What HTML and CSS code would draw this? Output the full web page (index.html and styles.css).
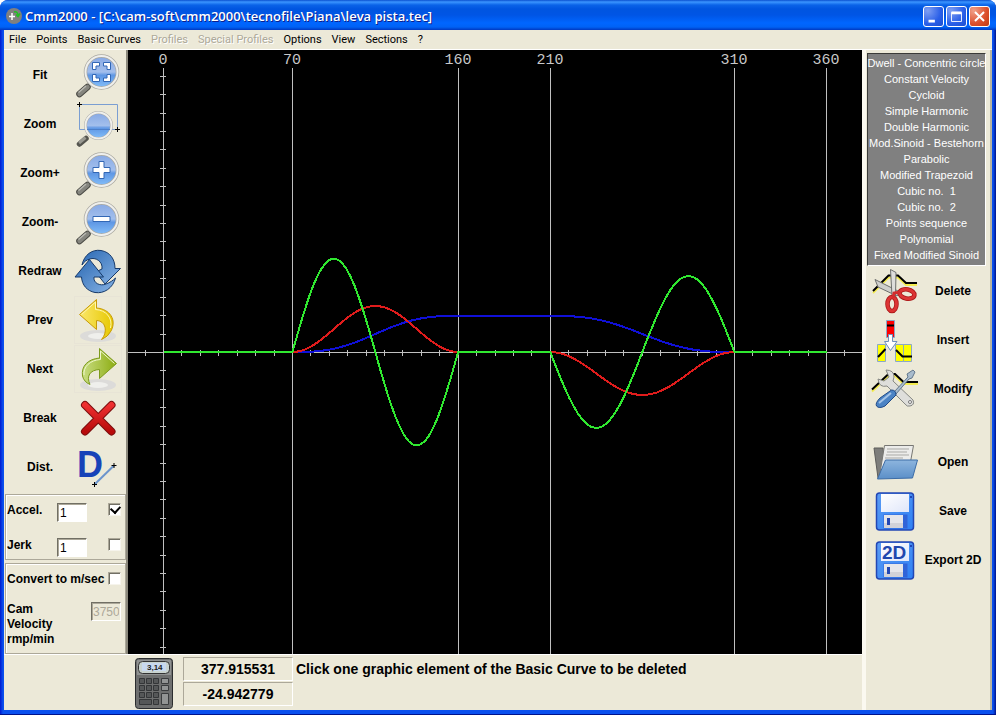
FILE: index.html
```html
<!DOCTYPE html>
<html lang="en">
<head>
<meta charset="utf-8">
<title>Cmm2000</title>
<link rel="stylesheet" href="styles.css">
</head>
<body>
<svg class="defs" aria-hidden="true">
  <defs>
    <linearGradient id="lens" x1="0" y1="0" x2="0" y2="1">
      <stop offset="0" stop-color="#86a8e4"/><stop offset=".5" stop-color="#a3bfec"/>
      <stop offset=".6" stop-color="#5f97e4"/><stop offset="1" stop-color="#84bffa"/>
    </linearGradient>
    <linearGradient id="blueArrow" x1="0" y1="0" x2="1" y2="1">
      <stop offset="0" stop-color="#2c6ab4"/><stop offset="1" stop-color="#86b2e4"/>
    </linearGradient>
    <linearGradient id="gold"><stop offset="0" stop-color="#fbe76a"/><stop offset="1" stop-color="#e6c800"/></linearGradient>
    <linearGradient id="leaf"><stop offset="0" stop-color="#c9dd83"/><stop offset="1" stop-color="#8cac10"/></linearGradient>
    <linearGradient id="red" x1="0" y1="0" x2="0" y2="1"><stop offset="0" stop-color="#ee3030"/><stop offset="1" stop-color="#b80a0a"/></linearGradient>
    <linearGradient id="disk" x1="0" y1="0" x2="1" y2="1"><stop offset="0" stop-color="#5b9cf4"/><stop offset="1" stop-color="#2f80f4"/></linearGradient>
    <linearGradient id="paper" x1="0" y1="0" x2="1" y2="1"><stop offset="0" stop-color="#fff"/><stop offset="1" stop-color="#dfe6fa"/></linearGradient>
    <linearGradient id="folder" x1="0" y1="0" x2="0" y2="1"><stop offset="0" stop-color="#8db5de"/><stop offset="1" stop-color="#5b8fc8"/></linearGradient>
    <g id="magnifier">
      <path d="M5.500 43L13.500 36" stroke="#484843" stroke-width="6.500" stroke-linecap="round"/>
      <path d="M5.500 43L13.500 36" stroke="#85857e" stroke-width="4.500" stroke-linecap="round"/>
      <path d="M4.500 41.500L12 35" stroke="#b9b9b2" stroke-width="1.500"/>
      <circle cx="27.500" cy="21" r="16" fill="url(#lens)" stroke="#aaa9a2" stroke-width="3.500"/>
      <circle cx="27.500" cy="21" r="16" fill="none" stroke="#efefec" stroke-width="2"/>
    </g>
    <g id="floppy">
      <rect x="6.500" y="6" width="37" height="37" rx="3" fill="url(#disk)" stroke="#2347b4" stroke-width="1.500"/>
      <path d="M11 7h28v18H11z" fill="url(#paper)"/>
      <rect x="40" y="9" width="2" height="2" fill="#2347b4"/>
      <rect x="13.500" y="27.500" width="24" height="14" fill="#3164d8"/>
      <path d="M14 28h19v13H14z" fill="#e6e6ea"/><path d="M14 36h19v5H14z" fill="#d2d2d8"/>
      <rect x="17" y="31" width="3" height="7" fill="#2347b4"/>
    </g>
  </defs>
</svg>

<div class="window">
  <header class="titlebar">
    <svg class="app-icon" viewBox="0 0 16 16"><circle cx="8" cy="8" r="8" fill="#808080"/><path d="M6 5v7M3 8.500h6" stroke="#fff" stroke-width="1.500"/><path d="M8 4q4-1 4 4M10 6.500l2 2 2-3" stroke="#22c022" stroke-width="1.500" fill="none"/></svg>
    <h1 class="title">Cmm2000 - [C:\cam-soft\cmm2000\tecnofile\Piana\leva pista.tec]</h1>
    <button class="win-btn" aria-label="Minimize"><svg viewBox="0 0 21 21"><path d="M5 14h7v3H5z" fill="#fff"/></svg></button>
    <button class="win-btn" aria-label="Maximize"><svg viewBox="0 0 21 21"><path d="M5 6h11v10H5z" fill="none" stroke="#fff"/><path d="M5 5h11v3H5z" fill="#fff"/></svg></button>
    <button class="win-btn close" aria-label="Close"><svg viewBox="0 0 21 21"><path d="M5.500 5.500l10 10M15.500 5.500l-10 10" stroke="#fff" stroke-width="2.200"/></svg></button>
  </header>

  <nav class="menubar">
    <button>File</button><button>Points</button><button>Basic Curves</button><button disabled>Profiles</button><button disabled>Special Profiles</button><button>Options</button><button>View</button><button>Sections</button><button>?</button>
  </nav>

  <main class="workspace">
    <div class="center">
      <div class="upper">
        <aside class="left">
          <div class="tools">
            <button class="tool"><span>Fit</span><svg viewBox="0 0 48 48"><use href="#magnifier"/><path d="M18.500 18.500v-7h7v3.500h-3.500v3.500zM29.500 11.500h7v7h-3.500v-3.500h-3.500zM36.500 23.500v7h-7v-3.500h3.500v-3.500zM25.500 30.500h-7v-7h3.500v3.500h3.500z" fill="#fff" stroke="#3267b5"/></svg></button>
            <button class="tool"><span>Zoom</span><svg viewBox="0 0 48 48"><path d="M5.500 4.500h38v25h-38z" fill="none" stroke="#7a9ed2"/><path d="M5.500 44L12 38.500" stroke="#55554f" stroke-width="5.500" stroke-linecap="round"/><path d="M5 43L11.500 37.500" stroke="#999991" stroke-width="3"/><circle cx="24.500" cy="25.500" r="13" fill="url(#lens)" stroke="#aaa9a2" stroke-width="3"/><circle cx="24.500" cy="25.500" r="13" fill="none" stroke="#efefec" stroke-width="2"/><path d="M13 29.500h23" stroke="#4d7fc9"/><path d="M3 4.500h5M5.500 2v5M41 29.500h5M43.500 27v5" stroke="#000"/></svg></button>
            <button class="tool"><span>Zoom+</span><svg viewBox="0 0 48 48"><use href="#magnifier"/><path d="M25 12.500h5v6h6v5h-6v6h-5v-6h-6v-5h6z" fill="#fff" stroke="#3267b5"/></svg></button>
            <button class="tool"><span>Zoom-</span><svg viewBox="0 0 48 48"><use href="#magnifier"/><path d="M19 18.500h17v5H19z" fill="#fff" stroke="#3267b5"/></svg></button>
            <button class="tool"><span>Redraw</span><svg viewBox="0 0 48 48"><g fill="url(#blueArrow)" stroke="#173a6a"><path d="M8 18C10 8 18 2 27 3.500 36 5 41 12 41 21.500L46.500 21.500 31 37 21.500 25 28 22C29 14 21 10 16 12 12 13 10 15 8 18z"/><path d="M41.500 31C39 41 30 47 21 45.500 13 44 8 38 7.500 30L1 30 15.500 12.500 29.500 30 20 30C19 36 26 39.500 32 37 36 35.500 39 33.500 41.500 31z"/></g></svg></button>
            <button class="tool"><span>Prev</span><svg class="boxed" viewBox="0 0 48 48"><ellipse cx="24" cy="40" rx="18" ry="6" fill="#dcdbd9"/><ellipse cx="24" cy="40" rx="10" ry="3" fill="#efefec"/><path d="M5.500 18.500L22.500 3.500V12C36 13 43 24 37 35Q34 41 27.500 43.500C34 36 32 25 22.500 24.500V33.500z" fill="url(#gold)" stroke="#c79a08"/><path d="M7.500 18.500L21.500 6V13.500C32 14 39 22 36.500 32" fill="none" stroke="#fff6b0"/></svg></button>
            <button class="tool"><span>Next</span><svg class="boxed" viewBox="0 0 48 48"><ellipse cx="24" cy="40" rx="18" ry="6" fill="#dcdbd9"/><ellipse cx="24" cy="40" rx="10" ry="3" fill="#efefec"/><path d="M42.500 18.500L25.500 3.500V13C14 14 7 21 8.500 31Q10 37 16 39.500C12 31 16 25 25.500 24.500V33.500z" fill="url(#leaf)" stroke="#7d9b1c"/><path d="M40.500 18.500L26.500 6V14.500C16 15 9 22 10 30" fill="none" stroke="#eff7cc"/></svg></button>
            <button class="tool"><span>Break</span><svg viewBox="0 0 48 48"><path d="M11 11L37.500 37.500M37.500 11L11 37.500" stroke="#7b0d0d" stroke-width="8" stroke-linecap="round"/><path d="M11 11L37.500 37.500M37.500 11L11 37.500" stroke="url(#red)" stroke-width="6" stroke-linecap="round"/></svg></button>
            <button class="tool"><span>Dist.</span><svg viewBox="0 0 48 48"><text x="3" y="34" class="glyph-d">D</text><path d="M20.500 41.500L40 22.500" stroke="#6b94cc" stroke-width="2"/><path d="M18 41.500h5M20.500 39v5M37.500 22.500h5M40 20v5" stroke="#000"/></svg></button>
          </div>
          <section class="frame">
            <div class="pair"><label for="accel">Accel.</label><input class="num" id="accel" value="1"><input type="checkbox" class="check" aria-label="Show acceleration" checked></div>
            <div class="pair"><label for="jerk">Jerk</label><input class="num" id="jerk" value="1"><input type="checkbox" class="check" aria-label="Show jerk"></div>
          </section>
          <section class="frame grow">
            <div class="convert"><label for="conv">Convert to m/sec</label><input type="checkbox" class="check" id="conv"></div>
            <div class="velocity"><label for="vel">Cam Velocity rmp/min</label><input class="num" id="vel" value="3750" disabled></div>
          </section>
        </aside>
        <svg class="chart" id="chart" viewBox="0 0 734 604" role="img" aria-label="Cam diagram"></svg>
      </div>
      <footer class="status">
        <svg class="calc" viewBox="0 0 38 51">
          <rect x=".5" y=".5" width="37" height="50" rx="3" fill="#6e6f6f" stroke="#2b2d2f"/>
          <path d="M2 2h34v15H2z" fill="#8f9191"/><rect x="3.500" y="3.500" width="31" height="12" rx="4" fill="#c9d3cf" stroke="#333"/>
          <rect x="7" y="5" width="24" height="8" fill="#c8d8ee"/><text x="12" y="12" class="glyph-calc">3,14</text>
          <g fill="#555758" stroke="#343638"><path d="M4.500 20.500h5v5h-5zM11.500 20.500h5v5h-5zM18.500 20.500h5v5h-5zM4.500 27.500h5v5h-5zM11.500 27.500h5v5h-5zM18.500 27.500h5v5h-5zM4.500 34.500h5v5h-5zM11.500 34.500h5v5h-5zM18.500 34.500h5v5h-5zM4.500 41.500h12v5h-12zM18.500 41.500h5v5h-5z"/></g>
          <path d="M26.500 20.500h7v5h-7zM26.500 27.500h7v5h-7zM26.500 35.500h7v11h-7z" fill="#929494" stroke="#3a3c3e"/>
        </svg>
        <div class="readouts"><output>377.915531</output><output>-24.942779</output></div>
        <p class="message">Click one graphic element of the Basic Curve to be deleted</p>
      </footer>
    </div>

    <aside class="right">
      <ul class="laws">
        <li>Dwell - Concentric circle</li><li>Constant Velocity</li><li>Cycloid</li><li>Simple Harmonic</li><li>Double Harmonic</li><li>Mod.Sinoid - Bestehorn</li><li>Parabolic</li><li>Modified Trapezoid</li><li>Cubic no.&nbsp; 1</li><li>Cubic no.&nbsp; 2</li><li>Points sequence</li><li>Polynomial</li><li>Fixed Modified Sinoid</li>
      </ul>
      <div class="actions">
        <button class="action"><svg viewBox="0 0 48 48"><path d="M3 26L18.500 10.500H28L36 18H47" fill="none" stroke="#f4ec50" stroke-width="2"/><path d="M3 24L18.500 8.500H28L36 16H47" fill="none" stroke="#000" stroke-width="2"/><path d="M5 12.500L30 25l-3 4L8 20z" fill="#cfcfcb" stroke="#6d6f6d"/><path d="M20.500 2.500L26 5.500 25.500 29H22z" fill="#dddddb" stroke="#6d6f6d"/><ellipse cx="22" cy="37" rx="4.500" ry="7" fill="none" stroke="#a81515" stroke-width="4.500"/><ellipse cx="22" cy="37" rx="4.500" ry="7" fill="none" stroke="#dc3434" stroke-width="3"/><ellipse cx="37" cy="27" rx="7.500" ry="4.500" transform="rotate(10 37 27)" fill="none" stroke="#a81515" stroke-width="4.500"/><ellipse cx="37" cy="27" rx="7.500" ry="4.500" transform="rotate(10 37 27)" fill="none" stroke="#dc3434" stroke-width="3"/><path d="M23 31l1-5 7-1" fill="none" stroke="#d22d2d" stroke-width="3"/></svg><span>Delete</span></button>
        <button class="action"><svg viewBox="0 0 48 48"><g stroke="#8aa8c8"><path d="M16.500 4.500h8v17h-8z" fill="#f00"/><path d="M7.500 28.500h8v17h-8zM25.500 28.500h8v17h-8zM33.500 28.500h8v17h-8z" fill="#ff0"/></g><path d="M17 9.500h7M8 41L15.500 33M26 34L32.500 40.500H42" fill="none" stroke="#000" stroke-width="2"/><path d="M18.500 18.500h4v7h4.500L20.500 34.500 14.500 25.500h4z" fill="#fff" stroke="#6e8fbd"/></svg><span>Insert</span></button>
        <button class="action"><svg viewBox="0 0 48 48"><path d="M2 26.500L18.500 11H25L33.500 19H48" fill="none" stroke="#f4ec50" stroke-width="2"/><path d="M2 24.500L18.500 9H25L33.500 17H48" fill="none" stroke="#000" stroke-width="2"/><path d="M16 5Q24 5 24 12L23 16 43 35Q45 40 40 41 37 42 35 39L17 21Q9 23 8 14L14 16 19 12z" fill="#dededb" stroke="#858783"/><circle cx="40" cy="37" r="1.500" fill="#fff" stroke="#777"/><path d="M24 27L38 12L37 9 43 5 45 7 42 13 39 14 26 29z" fill="#a9bccd" stroke="#63788c"/><path d="M21.500 25Q26 25 26 30L15 41Q9 44 6.500 41 5 38 10 33z" fill="#4b83c4" stroke="#204a87"/><path d="M9 38L21 28" stroke="#a4c4e8" stroke-width="2"/></svg><span>Modify</span></button>
      </div>
      <div class="actions files">
        <button class="action"><svg viewBox="0 0 48 48"><path d="M4 10h9l3 28-8 2z" fill="#7e7e7b" stroke="#5d5d5a"/><path d="M14.500 7.500H43.500L39 32 10 35z" fill="#ececea" stroke="#777773"/><path d="M17 11h22M17 14h20M16 17h23M15 20h18" stroke="#a9a9a6"/><path d="M15.500 22H47.500L42.500 40 7.500 41z" fill="url(#folder)" stroke="#3c6ca6"/></svg><span>Open</span></button>
        <button class="action"><svg viewBox="0 0 48 48"><use href="#floppy"/></svg><span>Save</span></button>
        <button class="action"><svg viewBox="0 0 48 48"><use href="#floppy"/><text x="12" y="23" class="glyph-2d">2D</text></svg><span>Export 2D</span></button>
      </div>
    </aside>
  </main>
</div>
<script src="chart.js"></script>
</body>
</html>
```
FILE: styles.css
```css
* { box-sizing: border-box; }
html, body { height: 100%; margin: 0; }
body { background: #fff; font-family: "Liberation Sans", Arial, sans-serif; font-size: 12px; color: #000; }
button { font: inherit; color: inherit; background: none; border: 0; padding: 0; margin: 0; }
.defs { position: absolute; width: 0; height: 0; }

.window {
  height: 100vh; display: flex; flex-direction: column;
  padding: 0 4px 4px;
  background: linear-gradient(90deg, #0019cf, #0a50ee 3px, #0a50ee calc(100% - 3px), #00138c);
  border-bottom: 1px solid #00138c;
  border-radius: 8px 8px 0 0;
  overflow: hidden;
}
.titlebar {
  flex: none; height: 30px; margin: 0 -4px; padding: 2px 6px 0;
  display: flex; align-items: center; gap: 2px;
  background: linear-gradient(#0a50d0 0, #3b95ff 2px, #0a63e8 5px, #0055e0 9px, #0055e5 15px, #0066ff 23px, #0062f5 27px, #0038c0 30px);
}
.app-icon { width: 16px; height: 16px; }
.title {
  flex: 1; margin: 0 0 0 1px; white-space: nowrap;
  font: 600 13px/20px "Open Sans", sans-serif; color: #fff; text-shadow: 1px 1px 0 #0f1f8a;
}
.win-btn {
  width: 21px; height: 21px; border: 1px solid #fff; border-radius: 3px;
  background: radial-gradient(circle at 20% 20%, #7f9ff2, #2a5fe8 60%, #1c4fd0);
}
.win-btn.close { background: radial-gradient(circle at 20% 20%, #f0a088, #dc4f2c 60%, #c03a10); }
.win-btn svg { display: block; width: 19px; height: 19px; }

.menubar {
  flex: none; height: 20px; display: flex; gap: 10px; padding: 1px 5px 0;
  background: #ece9d8; border-bottom: 1px solid #fff;
  font: 11px/18px Roboto, sans-serif;
}
.menubar button:disabled { color: #aca899; text-shadow: 1px 1px 0 #fff; }

.workspace { flex: 1; min-height: 0; display: flex; background: #ece9d8; }
.center { flex: 1; min-width: 0; display: flex; flex-direction: column; }
.upper { flex: 1; min-height: 0; display: flex; }
.left { flex: none; width: 124px; display: flex; flex-direction: column; border-right: 2px solid #8b887c; font-weight: bold; }
.tools { flex: none; border-bottom: 1px solid #ece9d8; margin-bottom: 2px; }
.tool { display: flex; align-items: center; width: 100%; height: 49px; font-weight: bold; }
.tool span { width: 72px; text-align: center; }
.tool svg { width: 48px; height: 48px; margin-left: -2px; fill: none; }
.boxed { outline: 1px solid #e8e4d6; outline-offset: -1px; }
.frame {
  margin: 0 0 3px 1px; padding: 6px 4px 0 1px;
  border: 1px solid #aca899; box-shadow: inset 1px 1px 0 #fff;
}
.grow { flex: 1; margin-bottom: 0; }
.pair { display: grid; grid-template-columns: 50px 30px 1fr; align-items: start; height: 35px; line-height: 18px; }
.pair:last-child { height: 23px; }
.num {
  width: 30px; height: 19px; padding: 0 2px; background: #fff; color: #000;
  border: 1px solid; border-color: #716f64 #fff #fff #716f64; box-shadow: inset 1px 1px 0 #aca899;
  font: 12px/15px "Liberation Sans", sans-serif; margin: 2px 0 0;
}
.num:disabled { background: #ece9d8; color: #aca899; padding: 0 1px; }
.check {
  appearance: none; flex: none; width: 13px; height: 13px; margin: 2px 0 0; justify-self: end; background: #fff; position: relative;
  border: 1px solid; border-color: #aca899 #f6f4ec #f6f4ec #aca899; box-shadow: inset 1px 1px 0 #716f64;
}
.check:checked::after {
  content: ""; position: absolute; left: 2px; top: 1px; width: 7px; height: 5px;
  border: 2px solid #000; border-width: 0 0 2px 2px; transform: rotate(-48deg);
}
.convert { display: flex; justify-content: space-between; line-height: 18px; white-space: nowrap; }
.velocity { display: flex; justify-content: space-between; margin-top: 14px; line-height: 15px; }
.velocity label { width: 60px; }
.velocity .num { margin-top: 0; }
.chart { flex: 1; min-width: 0; height: 100%; display: block; background: #000; shape-rendering: crispEdges; }
.chart .axis { stroke: #c0c0c0; fill: none; }
.chart .curve { fill: none; stroke-width: 2; }
.chart .disp { stroke: #1010d8; }
.chart .vel { stroke: #e01c1c; }
.chart .acc { stroke: #30e830; }
.chart text { font: 15px "Liberation Mono", monospace; fill: #c8c8c8; text-anchor: middle; }

.status { flex: none; height: 56px; display: flex; gap: 10px; padding: 3px 0 0 131px; border-top: 1px solid #fff; }
.calc { width: 38px; height: 51px; }
.readouts { width: 110px; display: grid; grid-template-rows: 24px 24px; row-gap: 1px; align-content: start; margin-top: -1px; }
.readouts output {
  border: 1px solid; border-color: #aca899 #fff #fff #aca899;
  font: bold 14px/22px "Liberation Sans", sans-serif; text-align: center;
}
.message { margin: 1px 0 0 -7px; font: bold 14px/20px "Liberation Sans", sans-serif; white-space: nowrap; }

.right { flex: none; width: 130px; padding: 3px 2px 0 4px; border-left: 4px solid #fbf9f0; border-right: 2px solid #b8b4a2; }
.laws {
  list-style: none; margin: 0 2px 0 -3px; padding: 1px 0 2px; background: #808080; color: #fff;
  border: 1px solid; border-color: #3a3a38 #fff #fff #3a3a38;
  font-size: 11px; line-height: 16px; text-align: center; white-space: nowrap;
}
.laws li { display: flex; justify-content: center; }
.action { display: flex; align-items: center; width: 100%; height: 49px; font-weight: bold; }
.action svg { width: 48px; height: 48px; flex: none; }
.action span { flex: 1; text-align: center; white-space: nowrap; }
.files { margin-top: 24px; }

.glyph-d { font: bold 36px "Liberation Sans", sans-serif; fill: #1743b8; }
.glyph-2d { font: bold 19px "Liberation Sans", sans-serif; fill: #1f47ae; }
.glyph-calc { font: bold 8px "Liberation Sans", sans-serif; fill: #222; }
```
FILE: chart.js
```js
const svg = document.getElementById("chart");
const originX = 35.5, originY = 302.5, step = 18.417;
const xOf = deg => originX + deg * step / 10;

function add(tag, attrs, text) {
  const el = document.createElementNS("http://www.w3.org/2000/svg", tag);
  for (const key in attrs) el.setAttribute(key, attrs[key]);
  if (text) el.textContent = text;
  svg.appendChild(el);
}

// Axes with a tick every ten units
let axes = `M0 ${originY}H734`;
for (let k = -1; k < 38; k++) {
  const x = Math.floor(originX + k * step) + 0.5;
  axes += `M${x} ${originY - 3}v6`;
}
for (let k = -16; k < 17; k++) {
  const y = Math.floor(originY + k * step) + 0.5;
  if (y > 20) axes += `M32 ${y}h6`;
}
for (const deg of [0, 70, 160, 210, 310, 360]) {
  axes += `M${Math.floor(xOf(deg)) + 0.5} 18V604`;
  add("text", { x: Math.floor(xOf(deg)), y: 14 }, String(deg));
}
add("path", { d: axes, class: "axis" });

// Cycloid segments: [start, end, from lift, to lift, velocity peak, acceleration peak]
const segments = [
  [0, 70, 0, 0, 0, 0],
  [70, 160, 0, 36, 46, 93.5],
  [160, 210, 36, 36, 0, 0],
  [210, 310, 36, 0, -43, -76],
  [310, 360, 0, 0, 0, 0]
];
const laws = {
  disp: (u, s) => s[2] + (s[3] - s[2]) * (u - Math.sin(2 * Math.PI * u) / (2 * Math.PI)),
  vel: (u, s) => s[4] * (1 - Math.cos(2 * Math.PI * u)) / 2,
  acc: (u, s) => s[5] * Math.sin(2 * Math.PI * u)
};
for (const name in laws) {
  const points = [];
  for (const s of segments) {
    for (let i = 0; i <= 40; i++) {
      const u = i / 40;
      points.push(`${xOf(s[0] + (s[1] - s[0]) * u).toFixed(1)},${(originY - 0.5 - laws[name](u, s)).toFixed(1)}`);
    }
  }
  add("polyline", { points: points.join(" "), class: `curve ${name}` });
}
```
